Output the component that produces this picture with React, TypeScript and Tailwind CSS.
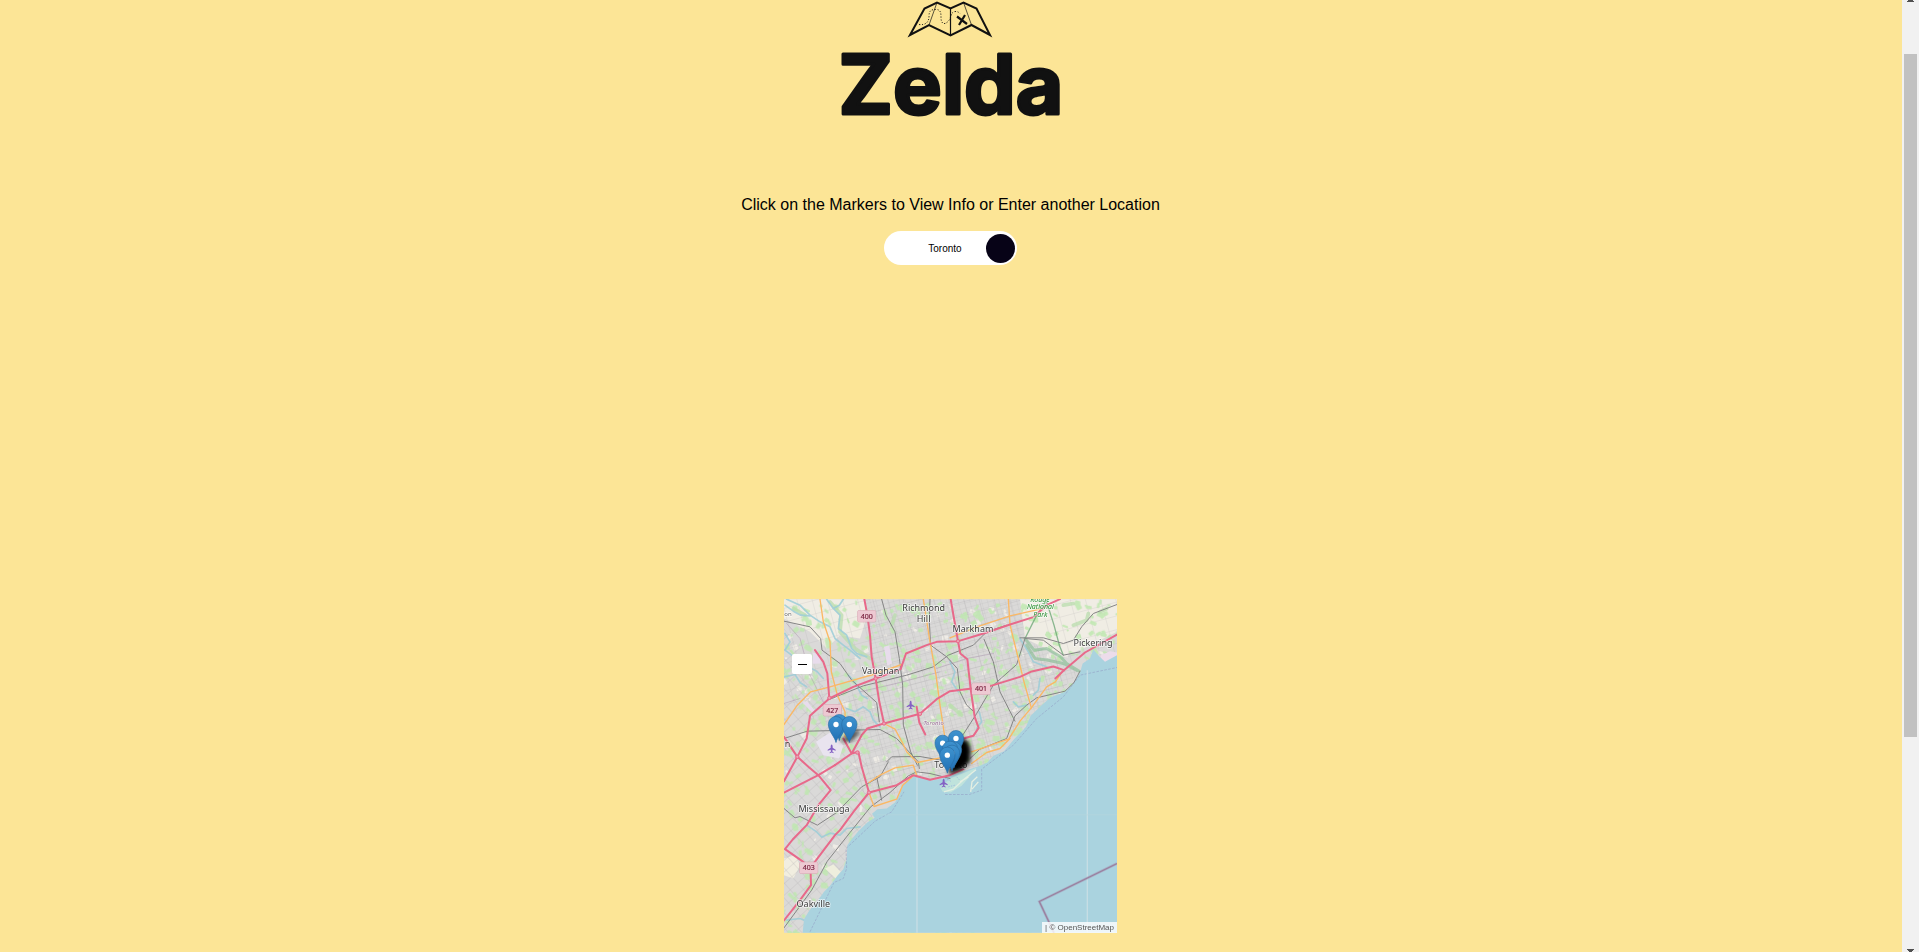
import { useState } from "react";

type Point = [number, number];
type Label = { text: string; x: number; y: number };

const COAST =
  "M1011 180 L975 200 L958 184 L940 163 L930 190 L908 205 L900 232 L880 265 L855 290 L812 306 L780 335 L752 362 L738 395 L702 432 L672 468 L640 482 L622 502 L600 512 L575 520 L545 530 L500 547 L455 556 L435 548 L410 540 L388 550 L367 572 L360 596 L345 622 L320 640 L292 642 L276 656 L284 668 L262 682 L235 708 L215 732 L202 750 L200 792 L190 822 L172 842 L150 872 L132 890 L112 918 L88 946 L72 972 L68 1013 L1011 1013 Z";

const MOTORWAYS = [
  "M253 12 L262 60 L270 120 L275 185 L287 250 L298 320 L312 385",
  "M105 165 L130 200 L142 235 L148 310 L90 362 L80 430 L52 485 L12 558",
  "M148 310 L220 275 L287 250 L362 222 L378 175 L440 150 L470 140 L535 138 L620 112 L690 88 L760 66 L800 30 L840 12",
  "M165 510 L215 475 L245 420 L262 400 L312 385 L420 356 L470 312 L510 288 L570 281 L630 273 L720 245 L752 230 L820 214 L852 225 L915 172 L1011 118",
  "M852 225 L826 250",
  "M190 430 L215 475 L235 470 L245 515 L267 592 L350 570 L400 540 L450 554 L510 540 L550 522",
  "M267 592 L222 648 L180 705 L165 720 L100 806",
  "M12 592 L115 540 L165 510",
  "M12 425 L52 485 L85 515 L115 540 L152 585 L115 630 L80 690 L38 733 L15 762 L70 800 L92 835 L93 870 L60 915 L12 976",
  "M512 12 L522 70 L534 138 L541 175 L562 192 L572 281 L584 365 L596 398 L580 422 L550 430",
  "M410 335 L418 382 L436 418",
];

const TRUNKS = [
  "M120 12 L130 80 L150 140 L154 230 L172 300 L195 350 L195 425",
  "M12 388 L52 330 L92 290 L150 275 L290 235 L365 208",
  "M430 12 L450 140 L468 240 L480 330 L495 430",
  "M510 128 L600 92 L690 62 L780 42",
  "M685 12 L690 88 L700 130 L715 190 L732 260 L754 338",
  "M575 470 L660 440 L686 432 L720 378 L754 338 L800 275 L826 260 L845 232",
  "M575 505 L620 472 L660 460 L690 430",
  "M312 385 L345 402 L366 440 L380 470 L412 502 L510 482",
  "M267 562 L300 540 L345 518 L400 510 L410 540",
  "M267 592 L282 634 L350 612 L368 570 L400 542",
];

const RAILS = [
  "M12 78 L90 95 L122 130 L126 165 L180 205 L215 255 L290 322 L298 380",
  "M305 12 L318 60 L345 110 L358 190 L368 270 L370 390 L392 470 L412 510",
  "M12 430 L82 408 L300 403 L350 430 L415 500 L418 520",
  "M150 312 L250 272 L380 240 L460 215 L505 180 L580 150 L620 110 L680 90",
  "M450 12 L448 80 L452 150 L500 185 L532 220 L540 290 L560 330 L582 350",
  "M612 132 L640 200 L660 290 L705 378",
  "M545 425 L590 355 L640 270 L710 208 L735 130 L790 135 L850 180 L900 170",
  "M900 228 L882 262 L855 288 L770 308 L740 330 L705 362 L680 430 L600 462 L570 490",
  "M1011 28 L940 55 L905 95 L880 135 L850 145 L790 128 L720 128",
  "M510 550 L450 535 L410 530 L385 542 L330 592 L272 635 L210 712 L142 798 L95 885 L12 998",
  "M325 500 L300 545 L245 575 L170 652 L112 690 L60 664 L45 668 L12 640",
  "M320 500 L335 485 L420 484 L510 500",
  "M290 545 L305 615",
];

const RIVERS = [
  "M20 12 L60 30 L90 60 L120 80 L150 95 L165 130 L190 150 L210 165 L240 190",
  "M140 12 L160 40 L180 60 L175 100 L200 120 L215 160 L230 175 L260 185",
  "M190 12 L178 30 L160 40 M15 30 L40 48 L62 60 L90 62",
  "M15 115 L30 140 L15 165 L35 180",
  "M12 245 L45 238 L60 262 L80 275",
  "M60 195 L85 215 L110 228 L130 250",
  "M80 690 L110 710 L125 726 L150 714 L180 720 L200 700 L240 695",
  "M200 340 L225 350 L250 335 L270 350 L280 375 L300 395",
  "M205 240 L225 262 L245 300 L262 310",
  "M510 200 L525 230 L515 260 L535 290",
  "M598 350 L605 380 L590 400",
  "M720 130 L745 170 L760 200 L800 215",
  "M780 250 L775 285 L760 300",
  "M700 320 L715 335 L740 330",
  "M20 975 L60 970 L72 975",
];

const PLACES: Label[] = [
  { text: "Richmond", x: 431, y: 48 },
  { text: "Hill", x: 431, y: 81 },
  { text: "Vaughan", x: 302, y: 238 },
  { text: "Markham", x: 579, y: 112 },
  { text: "Pickering", x: 939, y: 154 },
  { text: "Mississauga", x: 132, y: 650 },
  { text: "Oakville", x: 100, y: 935 },
];

const SHIELDS: Label[] = [
  { text: "400", x: 260, y: 63 },
  { text: "427", x: 157, y: 345 },
  { text: "401", x: 603, y: 281 },
  { text: "403", x: 86, y: 818 },
];

const PLANES: Point[] = [
  [392, 330],
  [155, 461],
  [491, 564],
];

const MARKERS: Point[] = [
  [178, 436],
  [168, 442],
  [208, 442],
  [488, 498],
  [528, 484],
  [522, 518],
  [510, 516],
  [516, 528],
  [502, 534],
];

// Small deterministic scatter for parks and neighbourhood blocks.
function scatter(count: number, seed: number) {
  let s = seed;
  const next = () => {
    s = (s * 16807) % 2147483647;
    return s / 2147483647;
  };
  return Array.from({ length: count }, () => ({
    x: 12 + next() * 999,
    y: 12 + next() * 999,
    w: 5 + next() * 17,
    h: 5 + next() * 13,
    r: next() * 90,
  }));
}

const PARKS = scatter(1100, 4711);
const BLOCKS = scatter(240, 977);

function Lines({ paths, color, width, opacity }: { paths: string[]; color: string; width: number; opacity?: number }) {
  return (
    <g fill="none" stroke={color} strokeWidth={width} opacity={opacity} strokeLinejoin="round" strokeLinecap="round">
      {paths.map((d) => (
        <path key={d} d={d} />
      ))}
    </g>
  );
}

function Marker({ x, y }: { x: number; y: number }) {
  return (
    <g transform={`translate(${x} ${y})`}>
      <path
        d="M0 0 C-3 -16 -23 -34 -23 -55 A23 23 0 0 1 23 -55 C23 -34 3 -16 0 0 Z"
        fill="url(#pin)"
        stroke="#2a6ea6"
        strokeWidth="2"
      />
      <circle cx="0" cy="-54" r="8" fill="#fff" />
    </g>
  );
}

function MapDrawing() {
  return (
    <svg viewBox="12 12 999 1001" className="block h-full w-full" role="img" aria-label="Toronto area">
      <defs>
        <pattern id="streets" width="17" height="15" patternUnits="userSpaceOnUse" patternTransform="rotate(-15)">
          <path d="M0 0H17M0 0V15" stroke="#c2c2c2" strokeWidth="1.6" fill="none" />
        </pattern>
        <pattern id="avenues" width="44" height="40" patternUnits="userSpaceOnUse" patternTransform="rotate(-15)">
          <path d="M0 0H44M0 0V40" stroke="#aaa8aa" strokeWidth="2" fill="none" />
        </pattern>
        <pattern id="westStreets" width="30" height="26" patternUnits="userSpaceOnUse" patternTransform="rotate(-42)">
          <path d="M0 0H30M0 0V26" stroke="#aeacae" strokeWidth="2" fill="none" />
        </pattern>
        <linearGradient id="pin" x1="0" y1="0" x2="0" y2="1">
          <stop offset="0" stopColor="#3f93cf" />
          <stop offset="1" stopColor="#1f6fb4" />
        </linearGradient>
        <filter id="soft" x="-50%" y="-50%" width="200%" height="200%">
          <feGaussianBlur stdDeviation="7" />
        </filter>
      </defs>

      <rect x="12" y="12" width="999" height="1001" fill="#dad9d8" />
      <path d="M12 12 H252 L262 60 L240 130 L180 120 L140 160 L90 110 L12 70 Z" fill="#f0ede4" />
      <path d="M720 12 H1011 V110 L910 160 L850 185 L735 130 Z" fill="#f0ede4" />
      <path d="M12 790 L45 780 L60 810 L40 850 L12 840 Z" fill="#f1eee0" />
      <g fill="#efece6">
        {BLOCKS.map((p, i) => (
          <rect key={i} x={p.x} y={p.y} width={p.w} height={p.h} rx="2" transform={`rotate(${p.r} ${p.x} ${p.y})`} />
        ))}
      </g>
      <path d="M12 12 H252 L290 260 L90 365 L12 340 Z M735 12 H1011 V200 H850 Z" fill="url(#avenues)" opacity="0.5" />
      <path
        d="M252 12 H720 L735 130 L900 230 L600 520 L270 620 L250 450 L90 365 L290 260 Z"
        fill="url(#streets)"
      />
      <path d="M252 12 H720 L735 130 L900 230 L600 520 L270 620 L90 365 L290 260 Z" fill="url(#avenues)" opacity="0.7" />
      <path d="M12 100 L90 200 L150 310 L90 365 L250 450 L290 640 L70 1013 H12 Z" fill="url(#westStreets)" opacity="0.7" />
      <g fill="#bfe8b0" opacity="0.85">
        {PARKS.map((p, i) => (
          <rect key={i} x={p.x} y={p.y} width={p.w} height={p.h} rx="3" transform={`rotate(${p.r} ${p.x} ${p.y})`} />
        ))}
      </g>

      <path d="M98 172 L120 178 L122 205 L98 206 Z M312 155 L328 150 L336 205 L322 212 Z M68 322 L82 320 L104 345 L96 352 Z" fill="#e8dcec" />
      <path d="M108 440 L150 412 L190 450 L178 490 L130 480 Z" fill="#e9e4ef" />
      <path d="M960 182 L990 168 L1011 172 L1011 192 L972 204 Z" fill="#ecdcea" />
      <path d="M135 820 L160 808 L182 830 L168 850 Z" fill="#eeeedd" />
      <path
        d="M150 20 L185 60 L180 110 L225 160 L270 190 M40 40 L75 60 M510 330 L545 360 M345 60 L335 90 M880 90 L920 75 L925 55 M850 30 L880 25 M960 50 L980 40 M560 240 L580 250"
        fill="none"
        stroke="#b9dcae"
        strokeWidth="11"
        opacity="0.75"
        strokeLinecap="round"
        strokeLinejoin="round"
      />

      <Lines paths={RIVERS} color="#9ccdd8" width={5} opacity={0.85} />
      <Lines
        paths={["M735 130 L762 165 L800 160 L842 185 L860 205 L898 228", "M740 150 L765 190 L805 195 L850 205 L890 225"]}
        color="#84bd91"
        width={9}
        opacity={0.6}
      />
      <Lines paths={["M800 20 L822 90 L838 150 L850 180", "M735 130 L770 60 L795 25"]} color="#5d9f6a" width={4} opacity={0.7} />

      <path d={COAST} fill="#aad3df" />
      <path d="M480 575 L515 548 L560 530 L590 518 L566 548 L545 572 L512 592 L488 590 Z" fill="#bfe3dc" />
      <path
        d="M492 590 L520 582 L552 552 L588 524 M572 590 L576 560 L592 545 M576 582 L595 560 M540 560 L565 545"
        fill="none"
        stroke="#e4efe2"
        strokeWidth="4"
      />
      <g fill="none" stroke="#8d93c0" strokeWidth="2" opacity="0.7">
        <path d="M495 598 H568 L605 585 V522 L650 488 L700 450 L770 370 L850 305 L900 240 L1011 217" strokeDasharray="8 4" />
        <path d="M90 1010 L162 862 L190 850 L200 820 L198 760 L225 735 L285 678 L335 650 L372 590" strokeDasharray="8 4" />
        <path d="M495 548 L515 560 M530 545 L540 556 M505 575 L525 570" stroke="#7d8ee0" strokeDasharray="4 4" />
      </g>
      <path d="M411 548 V1013 M922 225 V1013" stroke="#c6dde4" strokeWidth="4" />
      <path d="M290 659 H1011" stroke="#b6d6de" strokeWidth="2" />
      <path d="M1011 805 L778 919 L822 1013" fill="none" stroke="#a394b4" strokeWidth="8" opacity="0.5" />
      <path d="M1011 805 L778 919 L822 1013" fill="none" stroke="#9a819f" strokeWidth="4" />

      <Lines paths={["M20 85 L60 130 L90 240 L130 320", "M12 325 L60 310", "M470 220 L560 190 L640 175", "M240 290 L360 262 L480 230"]} color="#ab92ad" width={2} opacity={0.7} />
      <Lines paths={RAILS} color="#858585" width={3} />
      <Lines paths={TRUNKS} color="#fbb864" width={4} />
      <Lines paths={MOTORWAYS} color="#e8698a" width={6} />
      <g fill="#eba3b4" stroke="#e8698a" strokeWidth="3">
        {[[287, 250], [534, 138], [312, 385], [52, 485], [267, 592], [232, 472], [148, 308], [420, 356]].map(([x, y]) => (
          <circle key={`${x}-${y}`} cx={x} cy={y} r="5" />
        ))}
      </g>

      <g fontFamily="'Noto Sans', sans-serif" textAnchor="middle" strokeLinejoin="round" paintOrder="stroke">
        <g fontSize="27" fill="#3a3a3a" stroke="#ffffff" strokeOpacity="0.7" strokeWidth="5">
          {PLACES.map((p) => (
            <text key={p.text} x={p.x} y={p.y}>
              {p.text}
            </text>
          ))}
          <text x="463" y="520" textAnchor="start">
            Toronto
          </text>
          <text x="14" y="456" textAnchor="start">
            n
          </text>
          <text x="13" y="64" fontSize="18" textAnchor="start" fill="#666">
            on
          </text>
        </g>
        <text x="461" y="389" fontSize="18" fontStyle="italic" fill="#9b6f98" stroke="#fff" strokeOpacity="0.6" strokeWidth="3">
          Toronto
        </text>
        <g fontSize="21" fontStyle="italic" fill="#1f8a28" stroke="#ffffff" strokeOpacity="0.7" strokeWidth="4">
          <text x="780" y="20">Rouge</text>
          <text x="781" y="41">National</text>
          <text x="781" y="65">Park</text>
        </g>
        {SHIELDS.map((s) => (
          <g key={s.text}>
            <rect x={s.x - 27} y={s.y - 17} width="54" height="34" rx="4" fill="#edc9d2" stroke="#cf8fa2" strokeWidth="2" />
            <text x={s.x} y={s.y + 8} fontSize="21" fill="#78203e" stroke="#78203e" strokeWidth="0.5">
              {s.text}
            </text>
          </g>
        ))}
      </g>

      {PLANES.map(([x, y]) => (
        <path
          key={x}
          transform={`translate(${x} ${y})`}
          d="M0 -13 C2 -13 3 -10 3 -6 V-3 L12 3 V6 L3 3 L2 8 L6 11 V13 L0 11 L-6 13 V11 L-2 8 L-3 3 L-12 6 V3 L-3 -3 V-6 C-3 -10 -2 -13 0 -13 Z"
          fill="#8461c4"
        />
      ))}

      <path d="M178 440 L212 412 L232 402 L240 412 L214 438 Z" fill="#000" opacity="0.65" filter="url(#soft)" />
      <path d="M512 532 L520 460 L545 434 L560 440 L568 462 L566 498 L544 520 Z" fill="#000" stroke="#000" strokeWidth="8" filter="url(#soft)" />
      {MARKERS.map(([x, y]) => (
        <Marker key={`${x}-${y}`} x={x} y={y} />
      ))}
    </svg>
  );
}

function Logo() {
  return (
    <svg viewBox="0 0 260 140" className="block h-[140px] w-[260px]" role="img" aria-label="Zelda">
      <g fill="none" stroke="#111" strokeLinejoin="miter">
        <path d="M89 35 L103.500 8.500 L116 2.500 L129.500 8.500 L142.500 2.500 L155.500 8.500 L169 35 L150.500 25 L129.500 35.500 L108 25 Z" strokeWidth="2" />
        <path d="M129.500 8.500 V35.500" strokeWidth="1.200" />
        <path d="M116 2.500 L108 25 M142.500 2.500 L150.500 25" strokeWidth="0.700" />
        <path
          d="M98 24.500 C105 25.500 108 21.500 108 16.500 C108 10.500 110 9.500 115 9.500 C120 9.500 120 13.500 120 17.500 C120 23.500 123 25.500 127 21.500 C131 17.500 129 12.500 134 11.500 C137 11.500 138 12.500 139 13.500"
          strokeWidth="0.900"
          strokeDasharray="1.200 1.600"
        />
        <path d="M136 16.500 L146 24 M144 15 L138 25" strokeWidth="2.200" />
      </g>
      <text
        x="130"
        y="114"
        textAnchor="middle"
        fontFamily="Inter, sans-serif"
        fontWeight="700"
        fontSize="82"
        fill="#111"
        stroke="#111"
        strokeWidth="3"
        strokeLinejoin="round"
      >
        Zelda
      </text>
    </svg>
  );
}

function ScrollTrack() {
  return (
    <div aria-hidden="true" className="flex w-[17px] shrink-0 flex-col items-center justify-between bg-[#f1f1f1]">
      <svg viewBox="0 0 7 2" className="h-[2px] w-[7px]">
        <path d="M1 0H6V1H7V2H0V1H1Z" fill="#505050" />
      </svg>
      <div className="mt-[52px] mb-auto h-[683px] w-[13px] bg-[#c1c1c1]" />
      <svg viewBox="0 0 7 3" className="h-[3px] w-[7px]">
        <path d="M0 0H7V1H6V2H5V3H2V2H1V1H0Z" fill="#505050" />
      </svg>
    </div>
  );
}

export default function App() {
  const [place, setPlace] = useState("Toronto");

  return (
    <div className="flex min-h-screen bg-[#fce596] font-['Liberation_Sans',Arial,sans-serif] text-black">
      <main className="flex flex-1 flex-col items-center pr-px pb-[19px]">
        <Logo />
        <label htmlFor="place" className="mt-[53px] text-[16px] leading-6">
          Click on the Markers to View Info or Enter another Location
        </label>
        <form
          className="mt-[14px] flex h-[34px] w-[133px] items-center rounded-full bg-white pr-[2px] pl-5"
          onSubmit={(e) => e.preventDefault()}
        >
          <input
            id="place"
            value={place}
            onChange={(e) => setPlace(e.target.value)}
            className="min-w-0 flex-1 bg-transparent text-center text-[10px] outline-none"
          />
          <button type="submit" aria-label="Search" className="size-[29px] shrink-0 rounded-full bg-[#070317]" />
        </form>
        <section className="relative mt-[334px] h-[334px] w-[333px] overflow-hidden">
          <MapDrawing />
          <button
            type="button"
            aria-label="Zoom out"
            className="absolute top-[55px] left-2 flex size-5 items-center justify-center rounded-xs bg-white"
          >
            <span className="h-px w-[9px] bg-black" />
          </button>
          <p className="absolute right-0 bottom-0 bg-white/80 px-[3px] text-[8px] leading-[11px] text-[#555]">
            | ©{" "}
            <a href="#osm" className="text-[#555]">
              OpenStreetMap
            </a>
          </p>
        </section>
      </main>
      <ScrollTrack />
    </div>
  );
}
